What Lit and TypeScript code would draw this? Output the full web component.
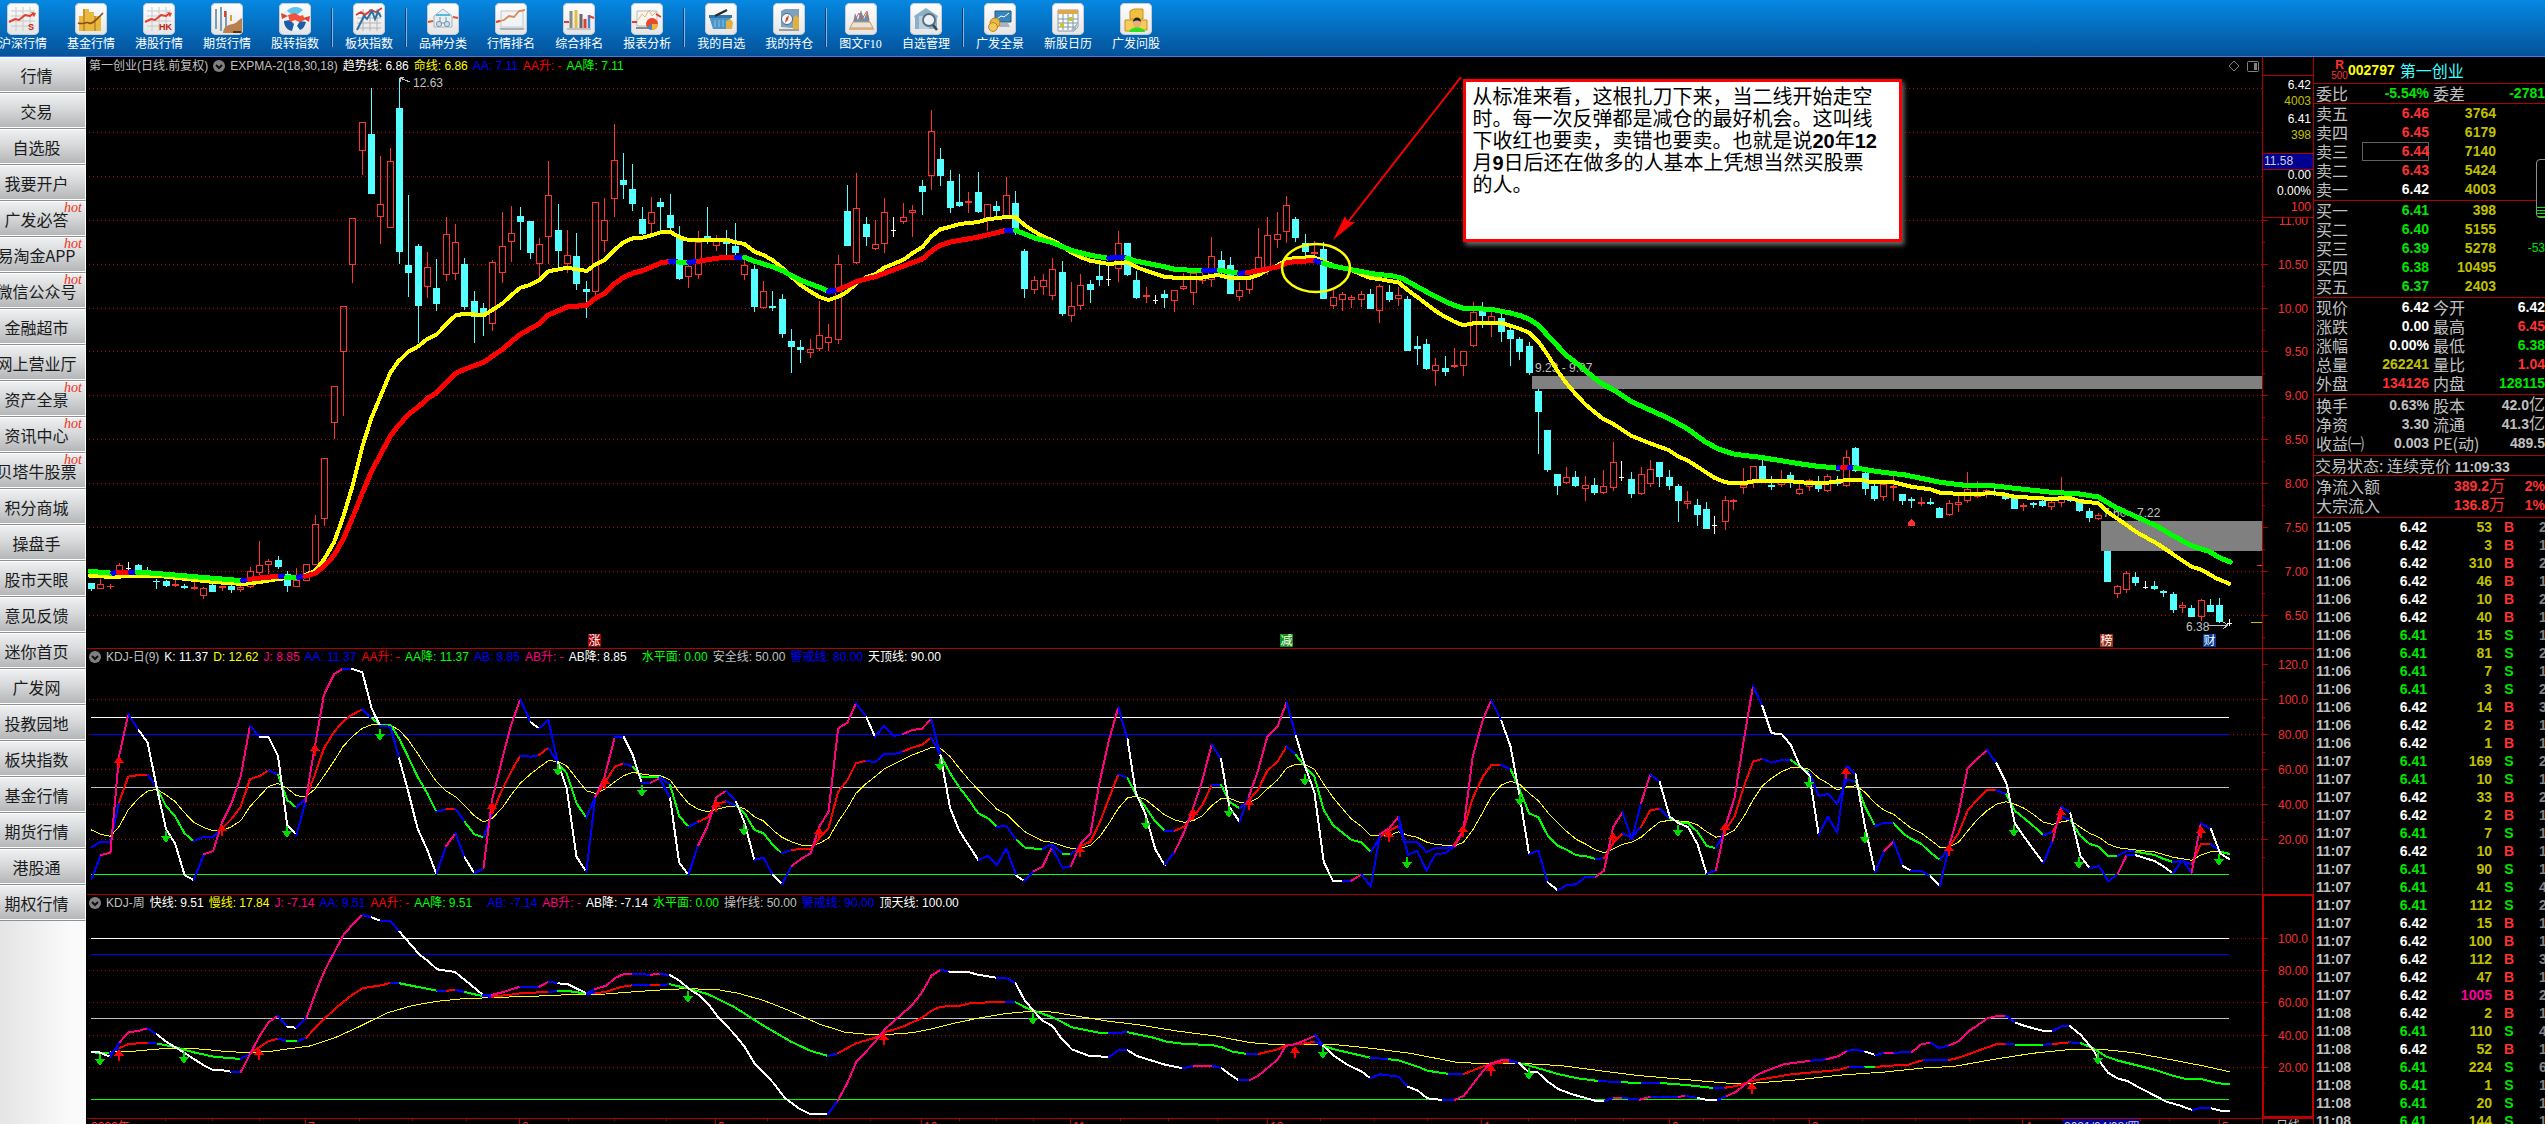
import { LitElement, html, svg, css } from "lit";
import { customElement } from "lit/decorators.js";

/* ---------- palette ---------- */
const INK: Record<string, string> = {
  r: "#ff3232",
  R: "#ff0000",
  c: "#54ffff",
  g: "#00ff00",
  b: "#0000ff",
  m: "#ff0080",
  w: "#ffffff",
  y: "#ffff00",
  s: "#c0c0c0",
};
const LINE = "#b00000";

/* ---------- series ----------
   Points are stored in blocks. Each block has an origin and a horizontal and
   vertical unit; vertical units are thirds of a pixel. */
interface Block {
  x: number;
  y: number;
  u: number;
  d: string;
}
interface Pt {
  k: string;
  x: number;
  y: number;
}
const points = (blocks: Block[]): Pt[][] =>
  blocks.map((b) =>
    b.d
      .trim()
      .split(/\s+/)
      .map((t) => {
        const m = /^([a-zA-Z]?)(-?\d+),(-?\d+)$/.exec(t)!;
        return { k: m[1], x: b.x + Number(m[2]) * b.u, y: b.y + Number(m[3]) / 3 };
      })
  );
const at = (p: Pt) => `${p.x.toFixed(1)},${p.y.toFixed(1)}`;

const plain = (blocks: Block[], colour: string, width: number) =>
  points(blocks).map(
    (ps) => svg`<polyline points=${ps.map(at).join(" ")} stroke=${colour} stroke-width=${width} />`
  );

const tinted = (blocks: Block[], width: number) =>
  points(blocks).map((ps) => {
    const runs: { k: string; p: Pt[] }[] = [];
    for (let i = 1; i < ps.length; i++) {
      const last = runs[runs.length - 1];
      if (last && last.k === ps[i].k) last.p.push(ps[i]);
      else runs.push({ k: ps[i].k, p: [ps[i - 1], ps[i]] });
    }
    return runs.map(
      (r) => svg`<polyline points=${r.p.map(at).join(" ")} stroke=${INK[r.k]} stroke-width=${width} />`
    );
  });

const U3 = 1 / 3;
const U8 = 800 / 1568;
const U9 = 720 / 1568;
const U10 = 780 / 1568;
const U6 = 900 / 1568;
const U7 = 1000 / 1568;
const U11 = 1320 / 1568;
const U12 = 1220 / 1568;

/* candles: kind, x, high, body top, body bottom, low */
const CANDLES: Block[] = [
  {
    x: 0, y: 180, u: U3,
    d: `c 274 1209 1209 1227 1232;r 301 1196 1211 1228 1228;r 331 1213 1218 1222 1226;r 358 1149 1156 1172 1175;w 385 1146 1163 1163 1175;c 415 1153 1156 1172 1172;c 442 1161 1170 1185 1185;c 469 1197 1202 1202 1227;c 499 1200 1203 1217 1222;r 526 1198 1211 1219 1221;c 553 1213 1218 1223 1227;r 583 1206 1222 1226 1229;r 610 1221 1225 1249 1256;c 637 1212 1214 1235 1235;r 667 1218 1219 1223 1232;c 694 1216 1218 1229 1239;r 721 1216 1222 1231 1235;r 751 1160 1172 1220 1224;r 778 1083 1154 1178 1186;r 805 1136 1142 1156 1182;c 835 1128 1140 1161 1167;c 862 1173 1182 1217 1236;r 889 1164 1200 1220 1220;r 919 1153 1153 1204 1204;r 946 1005 1033 1155 1155;r 973 835 835 1016 1038;r 1003 619 619 728 777;r 1030 379 379 515 708;r 1057 115 115 254 309;r 1087 -174 -174 -88 -15;c 1114 -276 -138 41 41;r 1141 -72 72 110 192;r 1171 -96 -56 143 143;c 1198 -305 -216 215 252;c 1225 45 255 278 351;c 1255 192 198 378 489;r 1282 216 262 320 354;c 1309 237 324 371 393;r 1339 111 163 284 303;r 1366 132 187 281 300;c 1393 234 252 380 390;c 1423 333 363 410 489`,
  },
  {
    x: 400, y: 60, u: U8,
    d: `c 164 729 744 768 828;r 181 600 607 791 813;r 201 456 559 640 669;r 218 438 520 547 606;c 236 441 468 486 570;c 256 483 483 578 597;r 273 534 553 613 654;r 291 303 406 532 613;c 311 432 510 573 624;r 328 510 586 613 640;c 346 519 588 672 690;c 366 663 687 696 774;r 383 427 427 697 706;r 401 414 481 542 576;r 420 192 301 418 471;c 438 279 360 375 417;c 456 312 387 432 453;c 475 441 477 522 525;r 493 411 457 493 525;c 511 414 426 441 513;c 530 402 465 504 513;c 548 498 531 657 660;r 566 610 619 652 684;r 585 513 546 646 658;c 603 441 528 534 552;r 620 525 538 559 573;c 640 510 534 552 585;c 658 489 558 579 597;r 675 595 616 646 660;c 695 615 627 741 756;r 712 663 694 745 747;c 730 693 738 744 753;c 750 702 717 822 834;c 767 807 843 861 939;c 785 840 861 870 909;r 805 837 868 880 894;r 822 722 826 868 873;r 840 792 832 850 873;r 859 585 613 841 852;c 877 375 453 558 558;r 895 339 445 610 613;c 914 471 492 531 558;r 932 480 553 566 570;r 949 414 457 553 579;w 968 471 511 511 531;r 987 429 472 487 492;r 1004 435 451 460 531;c 1024 360 378 396 465;r 1042 150 214 349 390;c 1059 264 297 348 378;c 1079 330 363 444 459;c 1097 342 426 438 441;r 1114 396 424 430 459;c 1134 336 396 456 459;r 1151 432 433 480 513;c 1169 423 438 453 475;r 1189 351 406 468 470;c 1206 393 429 516 525;c 1224 567 573 687 714;r 1244 648 661 691 702;r 1261 642 661 682 705;r 1279 594 628 709 720;c 1298 603 636 762 768;r 1316 666 739 769 786;r 1334 642 676 739 750;c 1353 660 672 690 729;c 1371 609 648 660 678;w 1389 618 658 658 678;r 1408 513 550 628 666;c 1426 549 549 645 648;c 1444 632 660 714 717;r 1463 681 706 710 729;w 1481 705 720 720 732;c 1498 690 702 714 744;r 1518 690 691 724 756;r 1536 640 679 688 691;r 1555 632 640 700 735`,
  },
  {
    x: 1200, y: 60, u: U9,
    d: `r 5 640 650 662 672;r 25 531 589 661 681;c 46 573 600 636 645;c 66 591 615 702 702;r 86 666 691 712 723;r 107 640 650 691 702;r 127 504 592 640 645;r 147 471 526 630 645;r 168 456 523 541 564;r 188 408 436 517 549;c 208 471 477 534 546;c 229 522 549 576 585;r 249 543 577 583 592;c 269 546 567 717 717;r 290 690 712 739 747;r 310 696 703 721 753;r 330 705 712 720 744;r 351 693 703 721 741;c 371 687 702 747 747;r 391 672 679 754 789;c 412 675 696 720 726;r 432 681 706 717 738;c 452 708 717 873 873;c 473 828 858 867 915;c 493 837 852 927 930;r 513 894 916 934 978;c 534 888 924 935 948;r 554 864 916 922 924;r 573 874 874 919 948;r 596 726 757 859 861;c 615 726 741 768 804;r 634 753 769 786 831;c 656 753 774 816 846;c 676 798 810 837 918;c 696 831 837 876 900;c 717 846 858 939 945;c 737 987 993 1056 1182;c 756 1110 1110 1230 1236`,
  },
  {
    x: 1500, y: 340, u: U10,
    d: `c 116 402 402 438 465;r 134 381 412 430 432;c 152 393 411 438 441;r 172 408 436 448 483;c 190 414 435 459 465;r 208 390 439 460 462;r 228 306 367 445 453;w 245 363 412 412 423;c 264 396 417 462 474;r 284 381 403 463 465;r 302 360 388 433 441;c 321 366 366 411 441;c 341 390 411 438 450;c 359 432 438 483 546;r 377 453 484 493 507;c 397 477 495 525 558;c 415 486 507 567 567;w 432 528 556 556 582;r 453 468 481 547 570;r 470 477 481 485 510;r 489 384 436 443 462;r 510 378 379 430 444;c 528 360 378 420 430;c 546 408 435 441 450;r 566 390 424 436 441;c 584 396 405 430 444;r 602 432 448 461 465;r 622 418 421 440 453;c 640 408 428 447 456;r 658 402 409 454 456;c 678 408 424 432 438;r 697 330 352 439 442;c 715 321 324 392 396;c 735 393 399 447 465;c 753 432 438 477 483;r 771 430 433 472 483;r 791 405 438 443 483;c 809 462 462 483 495;c 827 471 477 483 504;r 847 471 485 493 498;c 865 474 486 492 495;c 883 501 504 534 534;r 904 480 490 526 528;r 922 468 485 496 516;r 940 396 448 484 489;r 960 423 462 470 474;r 978 448 451 459 474;c 995 440 455 462 468;c 1016 462 466 477 480;c 1034 470 474 507 507;r 1052 490 495 500 513;c 1072 486 489 495 504;c 1091 478 483 498 501;r 1109 480 487 502 510;r 1129 411 478 490 501;c 1147 470 478 484 486;c 1165 480 486 513 516;c 1185 504 513 534 546;r 1203 518 526 538 540;c 1221 633 633 726 726;r 1241 735 739 761 774;r 1259 694 700 751 759;c 1278 696 711 729 738;w 1298 723 742 742 747;c 1316 723 738 747 750;c 1334 750 753 759 771;c 1354 756 762 810 819;r 1372 786 796 805 819;c 1390 795 804 831 831;r 1410 777 781 832 843;c 1428 777 795 816 816;c 1446 774 795 846 849;w 1466 837 848 848 858`,
  },
];

const candles = () =>
  CANDLES.map((b) =>
    b.d.split(";").map((t) => {
      const [k, ...n] = t.trim().split(" ");
      const [x0, h, a, z, l] = n.map(Number);
      const x = Math.floor(b.x + x0 * b.u);
      const Y = (v: number) => Math.round(b.y + v / 3);
      const top = Y(a);
      const bot = Math.max(Y(z), top + 1);
      const ink = INK[k];
      if (k === "w")
        return svg`<path d="M${x - 2} ${top + 0.5}h5M${x + 0.5} ${Y(h)}V${Y(l)}" stroke=${ink} />`;
      if (k === "c")
        return svg`<path d="M${x + 0.5} ${Y(h)}V${Y(l)}" stroke=${ink} /><rect x=${x - 3} y=${top} width="7" height=${bot - top} fill=${ink} />`;
      const box =
        bot - top > 2
          ? svg`<rect x=${x - 2.5} y=${top + 0.5} width="6" height=${bot - top - 1} stroke=${ink} />`
          : svg`<rect x=${x - 3} y=${top} width="7" height=${bot - top} fill=${ink} />`;
      return svg`<path d="M${x + 0.5} ${Y(h)}V${top}M${x + 0.5} ${bot}V${Math.max(Y(l), bot)}" stroke=${ink} />${box}`;
    })
  );

const MA_FAST: Block[] = [
  { x: 0, y: 180, u: U3, d: "270,1187 340,1191 400,1187 470,1187 540,1195 640,1206 730,1212 780,1206 840,1196 900,1192 946,1172 973,1137 1003,1085 1030,1010 1057,920 1087,800 1114,715 1141,650 1171,578 1198,540" },
  { x: 400, y: 60, u: U8, d: "0,900 17,874 36,859 54,836 72,823 91,793 109,766 128,761 164,766 181,750 201,730 218,706 236,683 256,674 273,660 291,634 328,623 346,628 366,633 383,613 401,600 420,570 438,547 456,535 475,533 493,526 511,517 530,516 548,532 566,540 640,540 658,547 675,552 695,575 712,585 730,600 750,625 767,650 785,675 805,695 822,711 840,720 859,710 877,695 895,668 914,652 932,642 949,623 987,599 1004,580 1024,561 1042,528 1059,508 1079,500 1097,492 1134,486 1151,478 1189,471 1206,471 1224,495 1244,515 1261,530 1279,541 1298,558 1316,578 1334,592 1353,602 1389,612 1426,607 1444,622 1463,632 1498,650 1518,653 1568,653" },
  { x: 1200, y: 60, u: U9, d: "0,654 38,645 66,653 86,655 107,654 127,645 147,630 168,617 190,598 210,593 249,592 269,604 290,616 325,628 371,654 391,657 412,663 432,667 452,690 473,711 493,732 513,753 534,771 554,785 573,796 596,790 656,789 676,797 696,806 717,818 737,845 756,882 780,936 800,973 820,1005 840,1034 877,1076 900,1092 940,1128 980,1150 1020,1170 1040,1188 1065,1204 1100,1235 1120,1253" },
  { x: 1500, y: 340, u: U10, d: "431,413 450,425 465,430 490,430 515,422 585,424 622,429 658,428 697,420 728,420 745,426 791,427 827,440 865,448 885,458 925,462 965,462 985,459 1010,462 1034,470 1109,477 1145,473 1165,483 1203,490 1221,515 1250,545 1280,577 1320,610 1350,640 1390,680 1410,689 1440,715 1466,731" },
];
const MA_SLOW: Block[] = [
  { x: 0, y: 180, u: U3, d: "270,1174 g338,1180 b355,1177 R392,1177 b412,1177 g440,1178 g560,1188 g640,1195 g728,1202 b748,1198 R800,1192 R840,1189 b860,1192 g895,1192 b915,1189 R946,1180 R973,1158 R1003,1125 R1030,1077 R1057,1015 R1087,940 R1114,875 R1141,825 R1171,768 R1198,733" },
  { x: 400, y: 60, u: U8, d: "0,1092 R17,1062 R36,1041 R54,1015 R72,998 R91,968 R109,940 R128,927 R164,907 R181,889 R201,868 R218,845 R236,823 R273,791 R291,765 R328,741 R366,736 R383,715 R401,700 R420,672 R438,652 R456,640 R475,632 R493,621 R511,609 R530,604 b545,606 g566,607 b584,604 R620,595 R640,592 R660,593 b675,592 g695,604 g730,620 g750,632 g785,661 g822,682 g840,694 b859,689 R877,678 R895,665 R914,656 R932,650 R987,618 R1024,597 R1042,573 R1059,556 R1079,546 R1134,531 R1189,511 b1206,511 g1224,522 g1244,534 g1279,548 g1316,571 g1353,586 g1389,595 b1400,592 b1425,594 g1444,604 g1498,620 g1518,628 g1568,632" },
  { x: 1200, y: 60, u: U9, d: "0,632 g8,631 b42,631 g86,640 b103,638 R127,632 R168,621 R190,608 R210,604 R252,602 b268,610 g290,618 g330,629 g380,642 g420,648 g440,655 g473,680 g513,710 g545,731 g573,745 g634,748 g676,759 g700,768 g717,778 g737,796 g756,824 g780,860 g800,888 g830,920 g855,950 g877,973 g900,989 g940,1025 g980,1050 g1020,1075 g1060,1105 g1100,1145 g1130,1168 g1165,1183 g1220,1192 g1300,1210 g1340,1218 g1392,1225" },
  { x: 1500, y: 340, u: U10, d: "680,384 b689,383 R702,383 b714,383 g735,389 g760,395 g815,405 g885,427 g935,436 g990,437 g1052,448 g1110,457 g1165,462 g1203,471 g1240,504 g1320,558 g1350,585 g1390,617 g1425,634 g1445,652 g1468,666" },
];

const DAY_J: Block[] = [
  { x: 80, y: 640, u: U6, d: "20,718 b36,645 m53,638 m68,350 m84,223 b102,270 w118,308 w134,445 w150,568 w166,612 w182,705 w198,720 b216,643 m232,633 m248,545 m264,490 m280,410 m296,258 b313,290 w328,290 w345,348 w361,555 w377,585 b393,485 m409,320 m425,165 m443,102 m458,86 b474,87 w492,97 w508,205 w523,258 b541,260 b556,355 w572,455 w588,565 w605,630 w621,702 b638,618 m654,580 b670,652 w687,700 b703,685 m718,480 m735,360 m751,255 m767,178 b785,247 w800,265 b816,240 b832,365 w848,445 w865,650 w882,695 b898,470 m914,410 m932,290 b947,290 w963,345 w979,430 b994,428 m1010,415 b1028,475 w1044,668 w1060,705 b1077,615 m1093,560 m1109,472 m1126,452 b1143,485 w1158,550 w1175,660 b1191,653 b1207,705 w1223,733 b1240,678 m1256,657 m1273,640 m1288,560 m1304,515 m1321,265 m1337,248 m1352,190 b1370,232 w1385,290 b1401,257 b1418,288 b1434,282 m1450,270 m1467,266 m1483,237 b1499,345 w1516,505 w1532,572 w1549,618 w1565,660" },
  { x: 960, y: 640, u: U11, d: "22,660 b33,648 b44,675 b55,625 b67,707 w76,722 b88,693 m98,680 m109,622 b122,684 b132,678 m143,612 m155,580 m166,425 m177,300 m188,202 b199,298 w209,460 w220,520 w232,628 w243,675 b255,635 m266,578 m277,505 m288,420 m299,313 b310,358 w320,500 w332,545 b343,470 m354,392 m365,290 m377,260 m388,187 b399,287 w410,380 w421,457 w432,665 w443,723 w455,723 b465,722 m477,703 b488,740 b499,582 m510,565 m521,530 b532,645 b543,632 b554,692 b565,642 b576,640 b588,618 m598,570 m609,350 m621,240 m631,181 b643,242 w654,320 w665,470 w676,643 b687,632 b698,727 w710,751 b721,735 b732,733 b743,711 b755,710 m765,692 m776,560 m787,517 b798,598 b809,490 m820,403 b831,425 w843,530 w854,550 w865,562 w876,612 w887,702 b898,690 m909,560 m920,475 m931,300 m942,138 b953,198 w964,280 w976,282 w987,315 w998,380 w1009,405 w1020,584 b1031,530 b1042,578 b1053,378 b1064,403 w1075,560 w1087,697 b1098,632 m1109,604 b1120,678 w1130,693 b1142,693 b1153,709 w1164,737 b1175,618 m1186,520 m1197,385 m1208,358 m1220,330 b1231,370 w1243,430 w1253,550 w1264,590 w1276,632 w1287,668 b1298,602 m1308,500 b1319,520 w1331,648 w1342,685 b1353,678 b1364,724 b1375,702 m1386,645 b1397,646 w1408,655 w1419,663 w1430,680 w1441,700 b1452,660 b1463,698 m1474,550 b1486,568 w1497,640 w1508,658" },
];
const DAY_K: Block[] = [
  { x: 80, y: 640, u: U6, d: "20,622 b36,605 b53,605 b68,487 R84,410 R102,405 R118,404 b134,443 g150,498 g166,530 g182,580 g198,603 b216,590 b232,590 b248,565 R264,537 R280,500 R296,418 R313,408 R328,391 b345,404 g361,480 g377,503 b393,475 R409,405 R425,325 R443,275 R458,245 R474,224 R492,208 b508,235 g523,254 g541,255 g556,295 g572,352 g588,410 g605,460 g621,515 b638,508 R654,506 b670,545 g687,583 g703,592 b718,520 R735,450 R751,395 R767,347 b785,350 b800,345 R816,323 b832,368 g848,400 g865,490 g882,533 b898,470 R914,430 R932,380 R947,370 b963,380 g979,410 g1010,410 b1028,435 g1044,528 g1060,560 b1077,545 R1093,533 R1109,492 R1126,484 b1143,497 g1158,520 g1175,570 g1191,580 g1207,615 g1223,640 b1240,630 R1256,627 R1273,627 R1288,595 R1304,565 R1321,455 R1337,420 R1352,370 R1370,362 b1385,367 b1401,342 b1418,343 b1434,334 R1450,323 R1467,314 R1483,293 b1499,345 g1516,400 g1532,442 g1549,480 g1565,520" },
  { x: 960, y: 640, u: U11, d: "22,520 g33,535 g44,560 b55,558 b67,600 g78,624 g98,627 b109,612 b122,641 g132,642 b143,618 R155,605 R166,548 R177,475 R188,403 b199,414 g209,465 g220,500 g232,545 g243,572 b255,572 R266,560 R277,530 R288,495 R299,435 b310,434 g320,485 g332,505 b343,480 R354,450 R365,392 R377,365 R388,319 b399,345 g410,380 g421,410 g432,510 g443,555 g465,600 g477,607 g488,637 b499,590 R510,572 R521,558 b528,607 b543,606 b554,636 b565,624 b585,622 R598,570 R609,475 R621,410 R631,375 R643,375 b654,388 g665,450 g676,520 g687,532 g698,586 g710,617 g721,630 g732,646 g743,648 g755,657 b765,655 R776,610 R787,580 b798,593 b809,560 R820,511 R831,506 b843,535 g854,547 g865,550 g876,575 g887,618 g898,625 b909,570 R920,530 R931,440 R942,365 R953,356 b964,368 b976,360 b987,360 g998,380 g1009,398 b1020,468 b1031,462 b1042,492 b1053,420 b1064,423 g1075,500 g1087,558 b1098,548 b1109,549 g1120,580 g1130,597 g1142,612 g1153,638 g1164,660 b1175,620 R1186,580 R1197,512 R1208,480 R1220,450 R1231,451 b1243,463 g1253,512 g1264,535 g1276,560 g1287,586 b1298,575 R1308,530 b1319,540 g1331,588 g1342,612 g1353,620 g1364,648 g1375,648 b1386,632 b1397,635 g1419,645 g1430,657 g1441,666 b1452,662 b1463,673 R1474,612 R1486,612 b1497,635 g1508,642" },
];
const DAY_D: Block[] = [
  { x: 80, y: 640, u: U6, d: "20,570 36,583 53,589 68,560 84,510 102,475 118,453 134,448 150,465 166,485 182,518 198,547 216,563 232,572 248,572 264,560 280,542 296,500 313,468 328,440 345,430 361,445 377,467 393,470 409,448 425,408 443,362 458,320 474,290 492,265 508,254 523,252 541,256 556,270 572,300 588,340 605,385 621,425 638,453 654,470 670,497 687,527 703,546 718,535 735,505 751,465 767,430 785,402 800,382 816,362 832,364 848,378 865,415 882,452 898,460 914,448 932,425 947,407 963,397 979,402 994,406 1010,406 1028,420 1044,457 1060,490 1077,508 1093,515 1109,508 1126,501 1143,500 1158,506 1175,530 1191,543 1207,570 1223,592 1240,606 1256,615 1273,617 1288,610 1304,595 1321,545 1337,505 1352,460 1370,430 1385,410 1401,387 1418,372 1434,358 1450,345 1467,334 1483,323 1499,325 1516,350 1532,385 1549,420 1568,455" },
  { x: 960, y: 640, u: U11, d: "24,455 33,480 44,508 55,522 67,552 78,577 98,603 109,607 122,618 132,625 143,625 155,616 166,590 177,550 188,505 199,474 209,469 220,478 232,502 243,525 255,540 266,547 277,542 288,527 299,497 310,476 320,475 332,487 343,487 354,475 365,447 377,420 388,385 399,372 410,374 421,388 432,432 443,472 455,508 465,537 477,560 488,587 510,586 521,575 532,586 543,592 554,606 565,613 576,616 588,617 598,607 609,570 621,517 631,470 643,435 654,424 665,433 676,460 687,482 698,517 710,548 721,575 732,598 743,612 755,630 765,638 776,627 787,613 798,606 809,592 820,568 831,546 843,541 865,545 876,555 887,575 898,592 909,586 920,570 931,530 942,480 953,438 964,415 976,395 987,383 998,383 1009,388 1020,415 1031,430 1042,450 1053,441 1064,437 1075,457 1087,490 1098,511 1109,523 1120,545 1130,565 1142,580 1153,600 1164,622 1175,621 1186,607 1197,573 1208,540 1220,512 1231,493 1243,485 1253,493 1264,505 1276,525 1287,547 1298,553 1308,546 1319,541 1331,562 1342,580 1353,592 1364,612 1375,623 1397,630 1419,636 1441,652 1463,661 1474,645 1486,635 1500,636 1508,640" },
];
const WEEK_J: Block[] = [
  { x: 80, y: 890, u: U7, d: "18,487 w30,487 w47,500 b62,457 m76,427 m91,423 m106,415 b120,432 w135,455 w165,490 w193,525 w208,540 w224,541 w237,545 b252,547 m266,495 m281,440 m296,396 m310,378 b325,410 w339,413 b355,384 m370,305 m384,240 m398,190 m413,135 m428,102 m443,75 b457,82 w472,93 b487,94 b501,125 w516,158 w533,195 w545,212 w560,238 w588,246 w605,272 w632,315 b645,315 m660,308 m690,290 b720,290 m735,275 b750,280 w765,283 w780,297 w795,310 b808,297 m825,287 m840,263 m853,252 m867,252 b895,254 m910,251 b925,255 w940,272 w955,297 w970,315 w985,342 w1000,380 w1025,430 w1042,470 w1057,518 w1087,578 w1105,623 w1127,655 w1145,672 w1173,672 b1188,632 m1203,580 m1217,517 m1247,455 m1262,418 m1280,387 m1305,345 m1320,308 m1335,257 m1350,239 b1363,245 w1392,246 w1408,254 w1437,263 b1452,264 b1467,280 w1481,330 w1495,362 w1510,393 w1525,408 w1537,440" },
  { x: 1060, y: 890, u: U12, d: "0,440 w15,478 w37,497 w63,501 b75,481 b87,481 w99,498 w135,524 w158,535 b172,528 m196,527 b208,535 w220,556 w230,571 b244,570 m255,557 m280,508 m290,468 m302,462 m316,450 m328,436 b338,467 w352,497 w370,525 w388,545 w399,565 b411,553 b435,560 b447,590 w460,602 w472,625 w492,630 b507,630 m519,618 m543,545 m554,520 m567,511 m578,510 b590,520 w602,545 w614,547 w626,573 w640,597 w660,614 w688,632 w700,632 b712,624 m724,624 b745,629 m760,620 b795,620 m805,618 b820,624 w832,630 w845,630 b857,618 m869,605 m885,575 m893,558 m905,545 m930,523 m965,512 b985,508 m1000,499 m1012,482 b1023,479 b1035,485 w1048,495 b1060,489 m1072,488 b1095,486 m1107,463 m1119,458 b1130,474 b1143,466 m1155,454 m1167,425 m1180,405 m1192,385 m1204,378 m1216,378 b1228,398 w1240,408 w1264,423 w1276,423 b1288,408 b1298,408 w1312,435 w1328,480 w1338,520 w1347,548 w1360,566 w1372,573 w1385,590 w1408,618 w1422,635 w1440,647 w1456,661 b1465,653 b1480,655 w1492,662 w1503,663" },
];
const WEEK_K: Block[] = [
  { x: 80, y: 890, u: U7, d: "18,487 g47,490 b62,474 R76,462 R108,458 b122,461 g150,472 g178,487 g210,500 g252,507 b267,490 R281,472 R296,453 R311,446 b325,453 g341,453 b355,443 R370,410 R398,360 R413,335 R428,313 R443,295 R475,285 R487,278 b501,280 g530,291 g560,302 b575,302 R590,300 b603,306 g632,319 b646,320 R675,314 R695,309 R735,306 b750,303 g765,303 g795,311 b808,310 R825,305 R850,290 R867,286 b895,285 R910,285 b925,283 g955,296 g985,313 g1025,350 g1070,405 g1115,455 g1145,482 g1173,498 b1188,490 R1217,460 R1247,443 R1262,427 R1290,410 R1320,384 R1335,362 R1350,350 R1380,347 R1395,340 R1425,337 R1452,335 b1467,337 g1485,355 g1525,382 g1537,393" },
  { x: 1060, y: 890, u: U12, d: "0,393 g15,412 g50,428 g63,429 b87,427 g120,443 g137,455 g160,462 g195,465 g208,472 g222,485 g240,492 b255,492 R280,478 R290,466 R316,460 R328,455 b338,467 g352,478 g399,503 b423,508 g435,511 g460,530 g472,542 g500,552 b519,552 R543,530 R554,522 R578,515 b592,520 g608,530 g640,552 g665,565 g692,573 b722,577 g748,579 b772,579 g805,585 g840,594 b855,593 R869,588 R890,572 R940,553 R1000,540 R1015,530 b1035,530 g1048,531 R1060,528 R1090,524 R1110,510 b1143,510 R1155,503 R1180,482 R1204,462 R1216,461 b1228,464 g1264,464 b1276,462 R1298,457 b1312,460 g1328,475 g1345,500 g1360,512 g1408,540 g1430,557 g1447,567 g1468,568 g1488,580 g1503,582" },
];
const WEEK_D: Block[] = [
  { x: 80, y: 890, u: U7, d: "18,487 76,485 105,480 130,476 165,475 195,478 225,484 265,488 300,484 325,477 360,468 400,443 440,408 480,370 520,347 560,334 600,326 660,322 720,318 765,314 825,312 870,305 925,298 955,296 1000,299 1030,309 1070,330 1110,360 1160,403 1200,427 1235,433 1262,434 1305,428 1335,417 1370,400 1410,384 1450,371 1495,363 1530,367 1537,370" },
  { x: 1060, y: 890, u: U12, d: "0,370 60,393 100,404 150,423 200,438 245,458 280,464 350,463 400,475 450,490 510,517 545,521 600,521 645,527 690,541 740,556 800,568 860,580 890,580 950,569 1000,556 1060,546 1110,534 1150,529 1200,508 1250,490 1300,478 1335,477 1380,488 1430,510 1470,528 1503,545" },
];

/* signal arrows; the point given is the tip */
const DAY_SIGNALS: Block[] = [
  { x: 80, y: 640, u: U6, d: "u68,348 u248,553 u409,312 u718,485 u914,410 u1108,480 u1288,562 d150,608 d361,593 d523,302 d833,407 d979,470 d1157,587 d1498,394" },
  { x: 960, y: 640, u: U11, d: "u143,615 u277,505 u343,473 u510,570 u598,555 u776,577 u909,550 u1053,382 u1175,613 u1308,505 u1474,558 d221,570 d320,533 d410,437 d531,686 d665,497 d853,590 d1009,447 d1075,613 d1252,590 d1329,686 d1496,678" },
];
const WEEK_SIGNALS: Block[] = [
  { x: 80, y: 890, u: U7, d: "u61,478 u281,475 u1260,430 d32,528 d163,521 d953,338 d1495,405" },
  { x: 1060, y: 890, u: U12, d: "u302,467 u554,523 u890,575 d338,507 d603,570 d1334,525" },
];
const signals = (blocks: Block[]) =>
  points(blocks).flat().map((p) => {
    const s = p.k === "u" ? 1 : -1;
    const x = Math.round(p.x);
    const y = Math.round(p.y);
    return svg`<path fill=${s > 0 ? "#ff0000" : "#00dc00"} d="M${x} ${y}l5 ${s * 7}h-4v${s * 5}h-2v${-s * 5}h-4z" />`;
  });

const grid = (ys: number[]) =>
  ys.map((y) => svg`<path d="M89 ${y + 0.5}H2262" stroke="#c00000" stroke-dasharray="1 3" />`);
const level = (y: number, colour: string) =>
  svg`<path d="M91 ${y + 0.5}H2229" stroke=${colour} />`;

/* ---------- toolbar pictograms (32 x 32) ---------- */
const sheet = svg`<path d="M4 8h24M4 13h24M4 18h24M4 23h24M9 4v24M16 4v24M23 4v24" stroke="#c9c9c9" stroke-width="1" />`;
const trend = svg`<path d="M2 19l6-3 4 1 6-5 5 1 4-3" stroke="#e0402c" stroke-width="2" fill="none" /><path d="M29 10l-5-1 3 5z" fill="#e0402c" />`;
const ICONS: Record<string, unknown> = {
  s: svg`${sheet}${trend}<text x="21" y="27" font-size="10" class="tag">S</text>`,
  gold: svg`<path d="M4 13h5v15H4zM8 6h6v22H8zM14 9h5v19h-5zM19 13h7v15h-7z" fill="#e8b93c" /><path d="M8 6h2v22H8zM19 13h2v15h-2z" fill="#c8922a" /><path d="M3 20c6 2 8-2 11 0s7-3 14-10" stroke="#8a4a20" stroke-width="1.6" fill="none" />`,
  hk: svg`${sheet}${trend}<text x="16" y="27" font-size="9" class="tag">HK</text>`,
  futures: svg`<path d="M5 6v20M10 4v24M15 8v19" stroke="#7c9cb4" stroke-width="2" /><path d="M14 8v6" stroke="#e04030" stroke-width="2" /><path d="M20 12v6" stroke="#e0a030" stroke-width="2" /><path d="M12 30c1-8 6-8 10-9 4-1 5-4 9-6v15z" fill="#b8804c" /><path d="M22 28h8v2h-8z" fill="#56321c" />`,
  globe: svg`<circle cx="16" cy="16" r="12" fill="#e9f4fb" /><path d="M8 8c4-5 12-5 16-1l-5 4-7 0z" fill="#5ec4e8" /><path d="M5 18l6-1 4 4-2 7c-5-1-8-5-8-10zM21 18l6 1c-1 4-3 7-6 8l-3-4z" fill="#1c5ca8" /><path d="M9 12l7-2 5 3 3-1 2 5-6 2-4-2-5 2z" fill="#f0523c" /><path d="M2 10l7 3-6 3zM31 13l-7 2 6 4z" fill="#e0402c" />`,
  sector: svg`<path d="M4 10h24M4 15h24M4 20h24M4 25h24M10 6v22M17 6v22M24 6v22" stroke="#b4b4b4" stroke-width="1" /><path d="M3 12l5-3 4 3 6-5 5 2 6-4" stroke="#d83c2c" stroke-width="1.8" fill="none" /><path d="M4 27l7-14 3 3 5-8 3 8 3-7 3 5" stroke="#2c70a8" stroke-width="2" fill="none" />`,
  kinds: svg`<path d="M7 24V13l9-7 9 7v11z" fill="#e6eef3" stroke="#9fb4c2" /><path d="M9 11h14v2H9z" fill="#58b8dc" /><path d="M13 14v6h6v-6" stroke="#7894a8" fill="none" /><circle cx="12" cy="21" r="2.6" fill="#cfe0ea" stroke="#7894a8" /><circle cx="20" cy="21" r="2.6" fill="#cfe0ea" stroke="#7894a8" /><path d="M1 19l5-1M26 14l5 1" stroke="#e0502c" stroke-width="2" />`,
  quote: svg`<path d="M6 8h22v16H6z" fill="#f1f3f4" stroke="#c4cacd" /><path d="M4 25h26l-2 2H6z" fill="#a8aeb2" /><path d="M1 19l8-2 5-4 5 1 5-6 6-1" stroke="#d08c5c" stroke-width="1.8" fill="none" /><path d="M1 19l4-1" stroke="#e0402c" stroke-width="2" />`,
  rank: svg`<path d="M8 8v17" stroke="#888" stroke-width="3" /><path d="M13 7v18" stroke="#e0c040" stroke-width="3" /><path d="M18 11v14" stroke="#666" stroke-width="3" /><path d="M22 16v9" stroke="#e04030" stroke-width="3" /><path d="M26 12v13" stroke="#3c88c8" stroke-width="2.4" /><path d="M4 26h24" stroke="#999" /><path d="M1 19h5M26 13l5 2" stroke="#e0402c" stroke-width="2" />`,
  report: svg`<path d="M6 8h20v15H6z" fill="#faf6ee" stroke="#b9b9b9" /><path d="M7 17l4-6 3 3 4-7 3 6 4-4" stroke="#e0b888" fill="none" /><path d="M5 25h18" stroke="#888" stroke-width="2" /><circle cx="21" cy="21" r="6" fill="#e8492c" /><path d="M21 21h6a6 6 0 0 1-6 6z" fill="#f0b430" /><path d="M21 21v6a6 6 0 0 1-5-3z" fill="#3c88c8" /><path d="M1 19h5M25 11l5 3" stroke="#e0402c" stroke-width="2" />`,
  basket: svg`<path d="M4 13h22l-3 13H8z" fill="#4a94c8" /><path d="M4 12h23v3H4z" fill="#2f78ae" /><path d="M10 13l12-6" stroke="#2b2b2b" stroke-width="2.4" /><path d="M10 17v7M14 17v7M18 17v7" stroke="#8cc4e6" /><path d="M21 18l4-2 3 3-1 7h-6z" fill="#e0b040" />`,
  hold: svg`<path d="M8 24V8l4-2h14v14l-6 5z" fill="#7ea2bc" /><circle cx="14" cy="16" r="5.5" fill="#f6fafc" stroke="#2f70a8" /><path d="M16 12l-1 5-3 3 1-5z" fill="#e0402c" /><path d="M20 15l3-3 3 3v11h-6z" fill="#e0b040" /><path d="M6 27h20" stroke="#8a8a8a" stroke-width="1.6" />`,
  doc: svg`<path d="M8 20L10 10l3 7 3-10 3 9 3-7 3 11z" fill="#6c8eb0" /><path d="M9 19l5-9 3 6 5-8 2 9" stroke="#d8603c" fill="none" /><path d="M5 25l3-6h17l3 6z" fill="#e8e2da" stroke="#c49a6c" /><path d="M4 26h25" stroke="#d8a860" stroke-width="1.6" />`,
  manage: svg`<path d="M5 26V15l-1-2 12-8 12 8-1 2v11z" fill="#8cb0c8" /><path d="M9 26V13h10v13z" fill="#b9cfdd" /><circle cx="19" cy="17" r="6" fill="#e8f2f8" stroke="#5a6c78" stroke-width="1.8" /><path d="M23 22l4 5" stroke="#3c4850" stroke-width="2.6" />`,
  panorama: svg`<path d="M11 8h16v11H11z" fill="#3884bc" stroke="#20587e" /><path d="M13 16l4-3 3 1 5-4" stroke="#fff" fill="none" /><path d="M17 20h7l2 4H15z" fill="#a9b4bb" /><circle cx="11" cy="20" r="5" fill="#e8b840" stroke="#b88420" /><circle cx="9" cy="24" r="4.4" fill="#f2c858" stroke="#b88420" />`,
  calendar: svg`<path d="M6 7h20v17l-4 4H6z" fill="#f8fbfc" stroke="#8a9aa4" /><path d="M6 7h20v4H6z" fill="#e0a848" /><path d="M6 16h20M6 20h20M6 24h18M11 11v16M16 11v16M21 11v16" stroke="#7f96a6" /><path d="M17 14h4v4h-4zM8 20h4v4H8z" fill="#c8c820" /><path d="M19 27l7-8-3 9z" fill="#9db4c4" />`,
  ask: svg`<path d="M10 8l4-2h9v10H10z" fill="#f0c040" stroke="#c89020" /><path d="M5 17h9l2 2v9H5z" fill="#f4cc58" stroke="#c89020" /><path d="M18 17h9v10h-9z" fill="#f4cc58" stroke="#c89020" /><circle cx="17" cy="20" r="4.4" fill="#e8b078" /><path d="M13 19c0-6 8-6 8 0-2-2-6-2-8 0z" fill="#222" /><path d="M9 29c1-6 15-6 16 0z" fill="#30e020" />`,
};
const TOOLS: (string[] | null)[] = [
  ["s", "沪深行情"], ["gold", "基金行情"], ["hk", "港股行情"], ["futures", "期货行情"], ["globe", "股转指数"], null,
  ["sector", "板块指数"], null,
  ["kinds", "品种分类"], ["quote", "行情排名"], ["rank", "综合排名"], ["report", "报表分析"], null,
  ["basket", "我的自选"], ["hold", "我的持仓"], null,
  ["doc", "图文F10"], ["manage", "自选管理"], null,
  ["panorama", "广发全景"], ["calendar", "新股日历"], ["ask", "广发问股"],
];

@customElement("tool-bar")
class ToolBar extends LitElement {
  static styles = css`
    :host {
      display: flex;
      height: 57px;
      box-sizing: border-box;
      padding-top: 3px;
      border-bottom: 1px solid #3a7ee6;
      background: linear-gradient(#0588e2, #04529a);
      overflow: hidden;
    }
    nav {
      display: flex;
      margin-left: -11px;
    }
    button {
      all: unset;
      padding: 0 10px;
      display: flex;
      flex-direction: column;
      align-items: center;
      font: 12px/18px "Liberation Serif", "Noto Sans CJK SC", sans-serif;
      color: #fff;
      white-space: nowrap;
      flex: none;
      cursor: pointer;
    }
    .tile {
      width: 32px;
      height: 32px;
      border-radius: 5px;
      background: linear-gradient(#ffffff, #e4e4e4);
      box-shadow: inset 0 0 0 1px #c8ccd0;
    }
    svg {
      display: block;
      fill: none;
    }
    .tag {
      font: bold 9px "Liberation Sans", sans-serif;
      fill: #c81e14;
    }
    i {
      width: 1px;
      margin: 5px 2px 9px 2px;
      border-left: 1px solid #063c78;
      background: #8ab4dc;
    }
  `;
  render() {
    return html`<nav>
      ${TOOLS.map((t) =>
        t
          ? html`<button type="button">
              <span class="tile"><svg width="32" height="32" viewBox="0 0 32 32" aria-hidden="true">${ICONS[t[0]]}</svg></span>
              <span>${t[1]}</span>
            </button>`
          : html`<i></i>`
      )}
    </nav>`;
  }
}

/* ---------- side menu ---------- */
const MENU =
  "行情 交易 自选股 我要开户 广发必答* 易淘金APP* 微信公众号* 金融超市 网上营业厅 资产全景* 资讯中心* 贝塔牛股票* 积分商城 操盘手 股市天眼 意见反馈 迷你首页 广发网 投教园地 板块指数 基金行情 期货行情 港股通 期权行情".split(" ");

@customElement("side-menu")
class SideMenu extends LitElement {
  static styles = css`
    :host {
      display: block;
      overflow: hidden;
      background: linear-gradient(90deg, #e4e4e4, #fafafa 80%);
    }
    nav {
      display: flex;
      flex-direction: column;
      margin-left: -12px;
    }
    button {
      all: unset;
      position: relative;
      box-sizing: border-box;
      height: 36px;
      border-right: 1px solid #fff;
      border-top: 1px solid #fff;
      border-bottom: 1px solid #8e9092;
      box-shadow: inset 0 -1px 0 #fff;
      background: linear-gradient(#eeeff0, #d6d8da 45%, #b2b4b6);
      text-align: center;
      font: 16px/31px "Noto Sans CJK SC", sans-serif;
      color: #1c1c1c;
      white-space: nowrap;
      cursor: pointer;
    }
    sup {
      position: absolute;
      right: 3px;
      top: -1px;
      font: italic 14px/14px "Liberation Serif", serif;
      color: #f03020;
    }
  `;
  render() {
    return html`<nav>
      ${MENU.map(
        (m) => html`<button type="button">${m.replace("*", "")}${m.endsWith("*") ? html`<sup>hot</sup>` : ""}</button>`
      )}
    </nav>`;
  }
}

/* ---------- chart area ---------- */
const legend = (parts: string[][]) => html`<div class="legend">
  ${parts.map(([k, t]) =>
    k === "o"
      ? html`<svg width="12" height="12" viewBox="0 0 12 12" aria-hidden="true"><circle cx="6" cy="6" r="6" fill="#808080" /><path d="M3 5l3 3 3-3" stroke="#101010" stroke-width="2" fill="none" /></svg>`
      : html`<span class=${"k" + k}>${t}</span>`
  )}
</div>`;

const MAIN_GRID = [88, 132, 176, 220, 264, 308, 351, 395, 439, 483, 527, 571, 615];
const DAY_GRID = [664, 699, 734, 769, 804, 839];
const WEEK_GRID = [938, 970, 1002, 1035, 1067];

const badge = (x: number, text: string, fill: string) =>
  svg`<rect x=${x} y="634" width="13" height="13" fill=${fill} /><text x=${x + 0.5} y="645" fill="#fff">${text}</text>`;

const scale = (ys: number[], labels: string[]) => {
  const half = Math.round((ys[1] - ys[0]) / 2);
  return ys.map(
    (y, i) => svg`<path d="M2262 ${y + 0.5}h6M2262 ${y + half + 0.5}h3" stroke=${LINE} />
      <text x="2308" y=${y + 5} text-anchor="end" fill="#f03232">${labels[i]}</text>`
  );
};

const MONTHS: [number, string][] = [
  [305, "7"], [519, "8"], [715, "9"], [921, "10"], [1070, "11"], [1267, "12"],
  [1481, "1"], [1669, "2"], [1809, "3"], [2022, "4"], [2219, "5"],
];
const MINOR = [165, 212, 259, 359, 412, 466, 568, 614, 666, 767, 819, 870, 959, 996, 1033, 1120, 1168, 1217, 1320, 1374, 1427, 1528, 1575, 1623, 1703, 1738, 1773, 1862, 1915, 1969, 2062, 2140, 2169];

@customElement("chart-area")
class ChartArea extends LitElement {
  static styles = css`
    :host {
      display: grid;
      grid-template-columns: minmax(0, 1fr) 52px;
      grid-template-rows: 591fr 246fr 224fr 6px;
      min-height: 0;
      background: #000;
      font: 12px/18px "Liberation Sans", "Noto Sans CJK SC", sans-serif;
    }
    .pane {
      position: relative;
      min-height: 0;
      min-width: 0;
      overflow: hidden;
    }
    .plot {
      display: block;
      width: 100%;
      height: 100%;
      fill: none;
      shape-rendering: crispEdges;
    }
    .soft {
      shape-rendering: auto;
    }
    .legend {
      position: absolute;
      left: 3px;
      top: 0;
      display: flex;
      align-items: center;
      gap: 5px;
      white-space: nowrap;
    }
    .legend svg {
      flex: none;
    }
    .ks { color: #c0c0c0; }
    .kw { color: #ffffff; }
    .ky { color: #ffff00; }
    .kb { color: #0000ff; }
    .kR { color: #ff0000; }
    .kg { color: #00ff00; }
    .km { color: #ff0080; }
    .kgap { width: 5px; }
    .note {
      position: absolute;
      left: 63.3%;
      top: 22px;
      width: 439px;
      height: 163px;
      box-sizing: border-box;
      margin: 0;
      padding: 4px 6px;
      border: 3px solid #ff0000;
      background: #fff;
      box-shadow: 2px 3px 5px #707070;
      color: #000;
      font: 20px/22px "Liberation Sans", "Noto Sans CJK SC", sans-serif;
      white-space: nowrap;
    }
    .series polyline {
      stroke-linejoin: round;
      stroke-linecap: round;
    }
  `;
  render() {
    return html`
      <section class="pane">
        <svg class="plot" viewBox="86 57 2176 591" preserveAspectRatio="none">
          ${grid(MAIN_GRID)} ${candles()}
          <rect x="1532" y="376" width="730" height="13" fill="#808080" />
          <rect x="2101" y="521" width="161" height="30" fill="#808080" />
          <g fill="#c0c0c0">
            <text x="413" y="87">12.63</text>
            <text x="1535" y="372">9.23 - 9.07</text>
            <text x="2103" y="517">7.60 - 7.22</text>
            <text x="2186" y="631">6.38</text>
          </g>
          <path d="M400 78l10 4M400 78v4M400 77h4M2208 625.5h19M2223 622l5 3-5 4" stroke="#c0c0c0" />
          <g class="series">${plain(MA_FAST, "#ffff00", 4)} ${tinted(MA_SLOW, 5)}</g>
          <path d="M1911.5 519l3.5 3.5v3h-7v-3z" fill="#ff3232" />
          ${badge(588, "涨", "#a00000")} ${badge(1280, "减", "#109010")} ${badge(2100, "榜", "#a03018")}
          ${badge(2203, "财", "#003c96")}
          <path d="M2257 565.5h5" stroke="#ff3232" />
          <path d="M2251 622.5h11" stroke="#c0c000" />
          <g class="soft">
            <ellipse cx="1316" cy="268" rx="34" ry="24" stroke="#ffff00" stroke-width="2.5" />
            <path d="M1461 77L1348 222" stroke="#ff0000" stroke-width="2" />
            <path d="M1333 240l12-24 3 6 7 0z" fill="#ff0000" />
            <path d="M2234 61l5 5-5 5-5-5z" stroke="#808080" />
            <rect x="2247.5" y="61.5" width="11" height="10" rx="1" stroke="#808080" />
            <path d="M2254 63h3v7h-3z" fill="#808080" />
          </g>
        </svg>
        ${legend([
          ["s", "第一创业(日线.前复权)"], ["o"], ["s", "EXPMA-2(18,30,18)"], ["w", "趋势线: 6.86"],
          ["y", "命线: 6.86"], ["b", "AA: 7.11"], ["R", "AA升: -"], ["g", "AA降: 7.11"],
        ])}
        <p class="note">
          从标准来看，这根扎刀下来，当二线开始走空<br />时。每一次反弹都是减仓的最好机会。这叫线<br />下收红也要卖，卖错也要卖。也就是说<b>20</b>年<b>12</b><br />月<b>9</b>日后还在做多的人基本上凭想当然买股票<br />的人。
        </p>
      </section>
      <section class="pane">
        <svg class="plot" viewBox="2262 57 52 591" preserveAspectRatio="none">
          ${scale(MAIN_GRID.slice(3), ["11.00", "10.50", "10.00", "9.50", "9.00", "8.50", "8.00", "7.50", "7.00", "6.50"])}
          <rect x="2262" y="57" width="52" height="160" fill="#000" />
          <rect x="2263" y="153" width="50" height="16" fill="#000090" />
          <path d="M2262.5 57V648M2313.5 57V648M2262 75.5h52M2262 153.5h52M2262 169.5h52M2262 217.5h52" stroke=${LINE} />
          <g text-anchor="end">
            <text x="2311" y="89" fill="#fff">6.42</text>
            <text x="2311" y="105" fill="#c0c000">4003</text>
            <text x="2311" y="123" fill="#fff">6.41</text>
            <text x="2311" y="139" fill="#c0c000">398</text>
            <text x="2311" y="179" fill="#fff">0.00</text>
            <text x="2311" y="195" fill="#fff">0.00%</text>
            <text x="2311" y="211" fill="#ff3232">100</text>
          </g>
          <text x="2264" y="165" fill="#d0d0d0">11.58</text>
        </svg>
      </section>

      <section class="pane">
        <svg class="plot" viewBox="86 648 2176 246" preserveAspectRatio="none">
          <path d="M87 648.5H2262" stroke=${LINE} />
          ${grid([699, 734, 769, 804, 839])} ${level(717, "#fff")} ${level(734, "#0000ff")} ${level(787, "#c0c0c0")}
          ${level(874, "#00ff00")}
          <g class="series">${plain(DAY_D, "#ffff00", 1)} ${tinted(DAY_K, 2)} ${tinted(DAY_J, 2)}</g>
          ${signals(DAY_SIGNALS)}
        </svg>
        ${legend([
          ["o"], ["s", "KDJ-日(9)"], ["w", "K: 11.37"], ["y", "D: 12.62"], ["m", "J: 8.85"], ["b", "AA: 11.37"],
          ["R", "AA升: -"], ["g", "AA降: 11.37"], ["b", "AB: 8.85"], ["m", "AB升: -"], ["w", "AB降: 8.85"], ["gap", ""],
          ["g", "水平面: 0.00"], ["s", "安全线: 50.00"], ["b", "警戒线: 80.00"], ["w", "天顶线: 90.00"],
        ])}
      </section>
      <section class="pane">
        <svg class="plot" viewBox="2262 648 52 246" preserveAspectRatio="none">
          ${scale(DAY_GRID, ["120.0", "100.0", "80.00", "60.00", "40.00", "20.00"])}
          <path d="M2262.5 648V894M2313.5 648V894M2262 648.5h52" stroke=${LINE} />
        </svg>
      </section>

      <section class="pane">
        <svg class="plot" viewBox="86 894 2176 224" preserveAspectRatio="none">
          <path d="M87 894.5H2262" stroke=${LINE} />
          ${grid(WEEK_GRID)} ${level(938, "#fff")} ${level(954, "#0000ff")} ${level(1018, "#c0c0c0")}
          ${level(1099, "#00ff00")}
          <g class="series">${plain(WEEK_D, "#ffff00", 1)} ${tinted(WEEK_K, 2)} ${tinted(WEEK_J, 2)}</g>
          ${signals(WEEK_SIGNALS)}
        </svg>
        ${legend([
          ["o"], ["s", "KDJ-周"], ["w", "快线: 9.51"], ["y", "慢线: 17.84"], ["m", "J: -7.14"], ["b", "AA: 9.51"],
          ["R", "AA升: -"], ["g", "AA降: 9.51"], ["gap", ""], ["b", "AB: -7.14"], ["m", "AB升: -"], ["w", "AB降: -7.14"],
          ["g", "水平面: 0.00"], ["s", "操作线: 50.00"], ["b", "警戒线: 90.00"], ["w", "顶天线: 100.00"],
        ])}
      </section>
      <section class="pane">
        <svg class="plot" viewBox="2262 894 52 224" preserveAspectRatio="none">
          ${scale(WEEK_GRID, ["100.0", "80.00", "60.00", "40.00", "20.00"])}
          <rect x="2263" y="895" width="50" height="222" stroke="#c00000" stroke-width="2" />
        </svg>
      </section>

      <section class="pane">
        <svg class="plot" viewBox="86 1118 2176 6" preserveAspectRatio="none">
          <path d="M87 1118.5H2262" stroke=${LINE} />
          ${MINOR.map((x) => svg`<path d="M${x + 0.5} 1118v3" stroke=${LINE} />`)}
          <text x="91" y="1131" fill="#ff3232">2020年</text>
          ${MONTHS.map(
            ([x, t]) => svg`<path d="M${x + 0.5} 1118v6" stroke=${LINE} /><text x=${x + 3} y="1131" fill="#ff3232">${t}</text>`
          )}
          <rect x="2063" y="1119" width="77" height="6" fill="#000090" />
          <text x="2064" y="1131" fill="#d0d0d0">2021/04/08/四</text>
        </svg>
      </section>
      <section class="pane">
        <svg class="plot" viewBox="2262 1118 52 6" preserveAspectRatio="none">
          <path d="M2262 1118.5h52M2262.5 1118v6M2313.5 1118v6" stroke=${LINE} />
          <text x="2276" y="1130" fill="#c0c0c0">日线</text>
        </svg>
      </section>
    `;
  }
}

/* ---------- quote panel ---------- */
const ASKS = [["卖五", "6.46", "3764", "r"], ["卖四", "6.45", "6179", "r"], ["卖三", "6.44", "7140", "r"], ["卖二", "6.43", "5424", "r"], ["卖一", "6.42", "4003", "w"]];
const BIDS = [["买一", "6.41", "398", "g"], ["买二", "6.40", "5155", "g"], ["买三", "6.39", "5278", "g"], ["买四", "6.38", "10495", "g"], ["买五", "6.37", "2403", "g"]];
const STATS = [["现价", "6.42", "w", "今开", "6.42", "w"], ["涨跌", "0.00", "w", "最高", "6.45", "r"], ["涨幅", "0.00%", "w", "最低", "6.38", "g"], ["总量", "262241", "y", "量比", "1.04", "r"], ["外盘", "134126", "r", "内盘", "128115", "g"]];
const BASICS = [["换手", "0.63%", "s", "股本", "42.0亿", "s"], ["净资", "3.30", "s", "流通", "41.3亿", "s"], ["收益㈠", "0.003", "s", "PE(动)", "489.5", "s"]];
const TICKS = `05 53 B 2;06 3 B 1;06 310 B 2;06 46 B 1;06 10 B 2;06 40 B 1;06 15 S 1;06 81 S 2;06 7 S 1;06 3 S 2;06 14 B 3;06 2 B 1;06 1 B 1;07 169 S 2;07 10 S 1;07 33 B 2;07 2 B 1;07 7 S 1;07 10 B 1;07 90 S 1;07 41 S 4;07 112 S 2;07 15 B 1;07 100 B 1;07 112 B 3;07 47 B 1;07 1005 B 2;08 2 B 1;08 110 S 4;08 52 B 1;08 224 S 6;08 1 S 1;08 20 S 1;08 144 S 16`
  .split(";")
  .map((t) => t.split(" "));

@customElement("quote-panel")
class QuotePanel extends LitElement {
  static styles = css`
    :host {
      display: flex;
      flex-direction: column;
      overflow: hidden;
      position: relative;
      background: #000;
      color: #c0c0c0;
      font: bold 14px/19px "Liberation Sans", "Noto Sans CJK SC", sans-serif;
      white-space: nowrap;
    }
    header {
      display: flex;
      align-items: center;
      height: 26px;
      padding-left: 17px;
      flex: none;
    }
    .flag {
      display: flex;
      flex-direction: column;
      align-items: center;
      width: 17px;
      font: bold 12px/11px "Liberation Sans", sans-serif;
      color: #ff3232;
    }
    .flag small {
      font: 10px/9px "Liberation Sans", sans-serif;
    }
    .code {
      color: #ffff00;
    }
    h1 {
      margin: 0 0 0 5px;
      font: 16px/19px "Noto Sans CJK SC", sans-serif;
      color: #40ffff;
    }
    table {
      border-collapse: separate;
      border-spacing: 0;
      table-layout: fixed;
      width: 100%;
      flex: none;
      border-top: 1px solid #b00000;
    }
    td,
    th {
      padding: 0;
      height: 19px;
      line-height: 19px;
      text-align: right;
      vertical-align: top;
      overflow: visible;
    }
    th {
      text-align: left;
      padding-left: 2px;
      font: 16px/18px "Noto Sans CJK SC", sans-serif;
    }
    .pad {
      padding-bottom: 1px;
    }
    .trio {
      padding: 1px 0 2px;
    }
    .a { width: 46px; }
    .v { width: 67px; }
    .l { width: 46px; }
    .n { width: 67px; }
    .e { width: 40px; }
    th.l { padding-left: 4px; }
    .big {
      font-size: 16px;
      line-height: 14px;
      font-weight: normal;
    }
    .r { color: #ff3232; }
    .g { color: #00e600; }
    .w { color: #ffffff; }
    .y { color: #c0c000; }
    .s { color: #c0c0c0; }
    .m { color: #ff00a0; }
    .box {
      box-shadow: inset 0 0 0 1px #606060;
    }
    .thin {
      font: 12px/19px "Liberation Sans", sans-serif;
    }
    .state {
      flex: none;
      border-top: 1px solid #b00000;
      height: 19px;
      padding-left: 1px;
      font: 16px/18px "Noto Sans CJK SC", sans-serif;
    }
    .state b {
      font: bold 14px/18px "Liberation Sans", sans-serif;
    }
    .ticks td {
      height: 18px;
      line-height: 18px;
    }
    .ticks .t { width: 66px; padding-left: 2px; text-align: left; }
    .ticks .p { width: 45px; }
    .ticks .q { width: 65px; }
    .ticks .f { width: 34px; text-align: center; }
    .ticks .c { text-align: left; padding-left: 13px; color: #808080; }
    .gauge {
      position: absolute;
      left: 222px;
      top: 102px;
      width: 14px;
      height: 57px;
      border: 1px solid #909090;
      border-radius: 4px;
      background: linear-gradient(#000, #000) 0 0 / 100% 45px no-repeat,
        repeating-linear-gradient(#000 0 2px, #00e600 2px 3px);
    }
  `;
  private depth(rows: string[][], first: boolean) {
    return html`<table class="pad">
      ${rows.map(
        ([n, p, v, k], i) => html`<tr>
          <th class="a">${n}</th>
          <td class="v ${k} ${first && i === 2 ? "box" : ""}">${p}</td>
          <td class="n y">${v}</td>
          <td class="thin g">${!first && i === 2 ? "-53" : ""}</td>
        </tr>`
      )}
    </table>`;
  }
  private value(t: string) {
    const m = /^(.*?)([亿万])$/.exec(t);
    return m ? html`${m[1]}<span class="big">${m[2]}</span>` : t;
  }
  private pairs(rows: string[][], cls: string) {
    return html`<table class=${cls}>
      ${rows.map(
        ([a, b, bk, c, d, dk]) => html`<tr>
          <th class="a">${a}</th>
          <td class="v ${bk}">${b}</td>
          <th class="l">${c}</th>
          <td class=${dk}>${this.value(d)}</td>
        </tr>`
      )}
    </table>`;
  }
  render() {
    return html`
      <header>
        <span class="flag">R<small>500</small></span>
        <span class="code">002797</span>
        <h1>第一创业</h1>
      </header>
      ${this.pairs([["委比", "-5.54%", "g", "委差", "-2781", "g"]], "")} ${this.depth(ASKS, true)}
      ${this.depth(BIDS, false)} ${this.pairs(STATS, "pad")} ${this.pairs(BASICS, "trio")}
      <div class="state">交易状态: 连续竞价 <b>11:09:33</b></div>
      <table class="trio">
        <tr><th>净流入额</th><td class="r">${this.value("389.2万")}</td><td class="r e">2%</td></tr>
        <tr><th>大宗流入</th><td class="r">${this.value("136.8万")}</td><td class="r e">1%</td></tr>
      </table>
      <table class="ticks">
        ${TICKS.map(([m, q, f, c]) => {
          const buy = f === "B";
          return html`<tr>
            <td class="t">11:${m}</td>
            <td class="p ${buy ? "w" : "g"}">${buy ? "6.42" : "6.41"}</td>
            <td class="q ${q === "1005" ? "m" : "y"}">${q}</td>
            <td class="f ${buy ? "r" : "g"}">${f}</td>
            <td class="c">${c}</td>
          </tr>`;
        })}
      </table>
      <div class="gauge"></div>
    `;
  }
}

@customElement("app-root")
class AppRoot extends LitElement {
  static styles = css`
    :host {
      display: grid;
      grid-template-rows: auto minmax(0, 1fr);
      height: 100vh;
      overflow: hidden;
      background: #000;
    }
    main {
      display: grid;
      grid-template-columns: 86px minmax(0, 1fr) 231px;
      min-height: 0;
    }
  `;
  render() {
    return html`<tool-bar></tool-bar>
      <main>
        <side-menu></side-menu>
        <chart-area></chart-area>
        <quote-panel></quote-panel>
      </main>`;
  }
}
